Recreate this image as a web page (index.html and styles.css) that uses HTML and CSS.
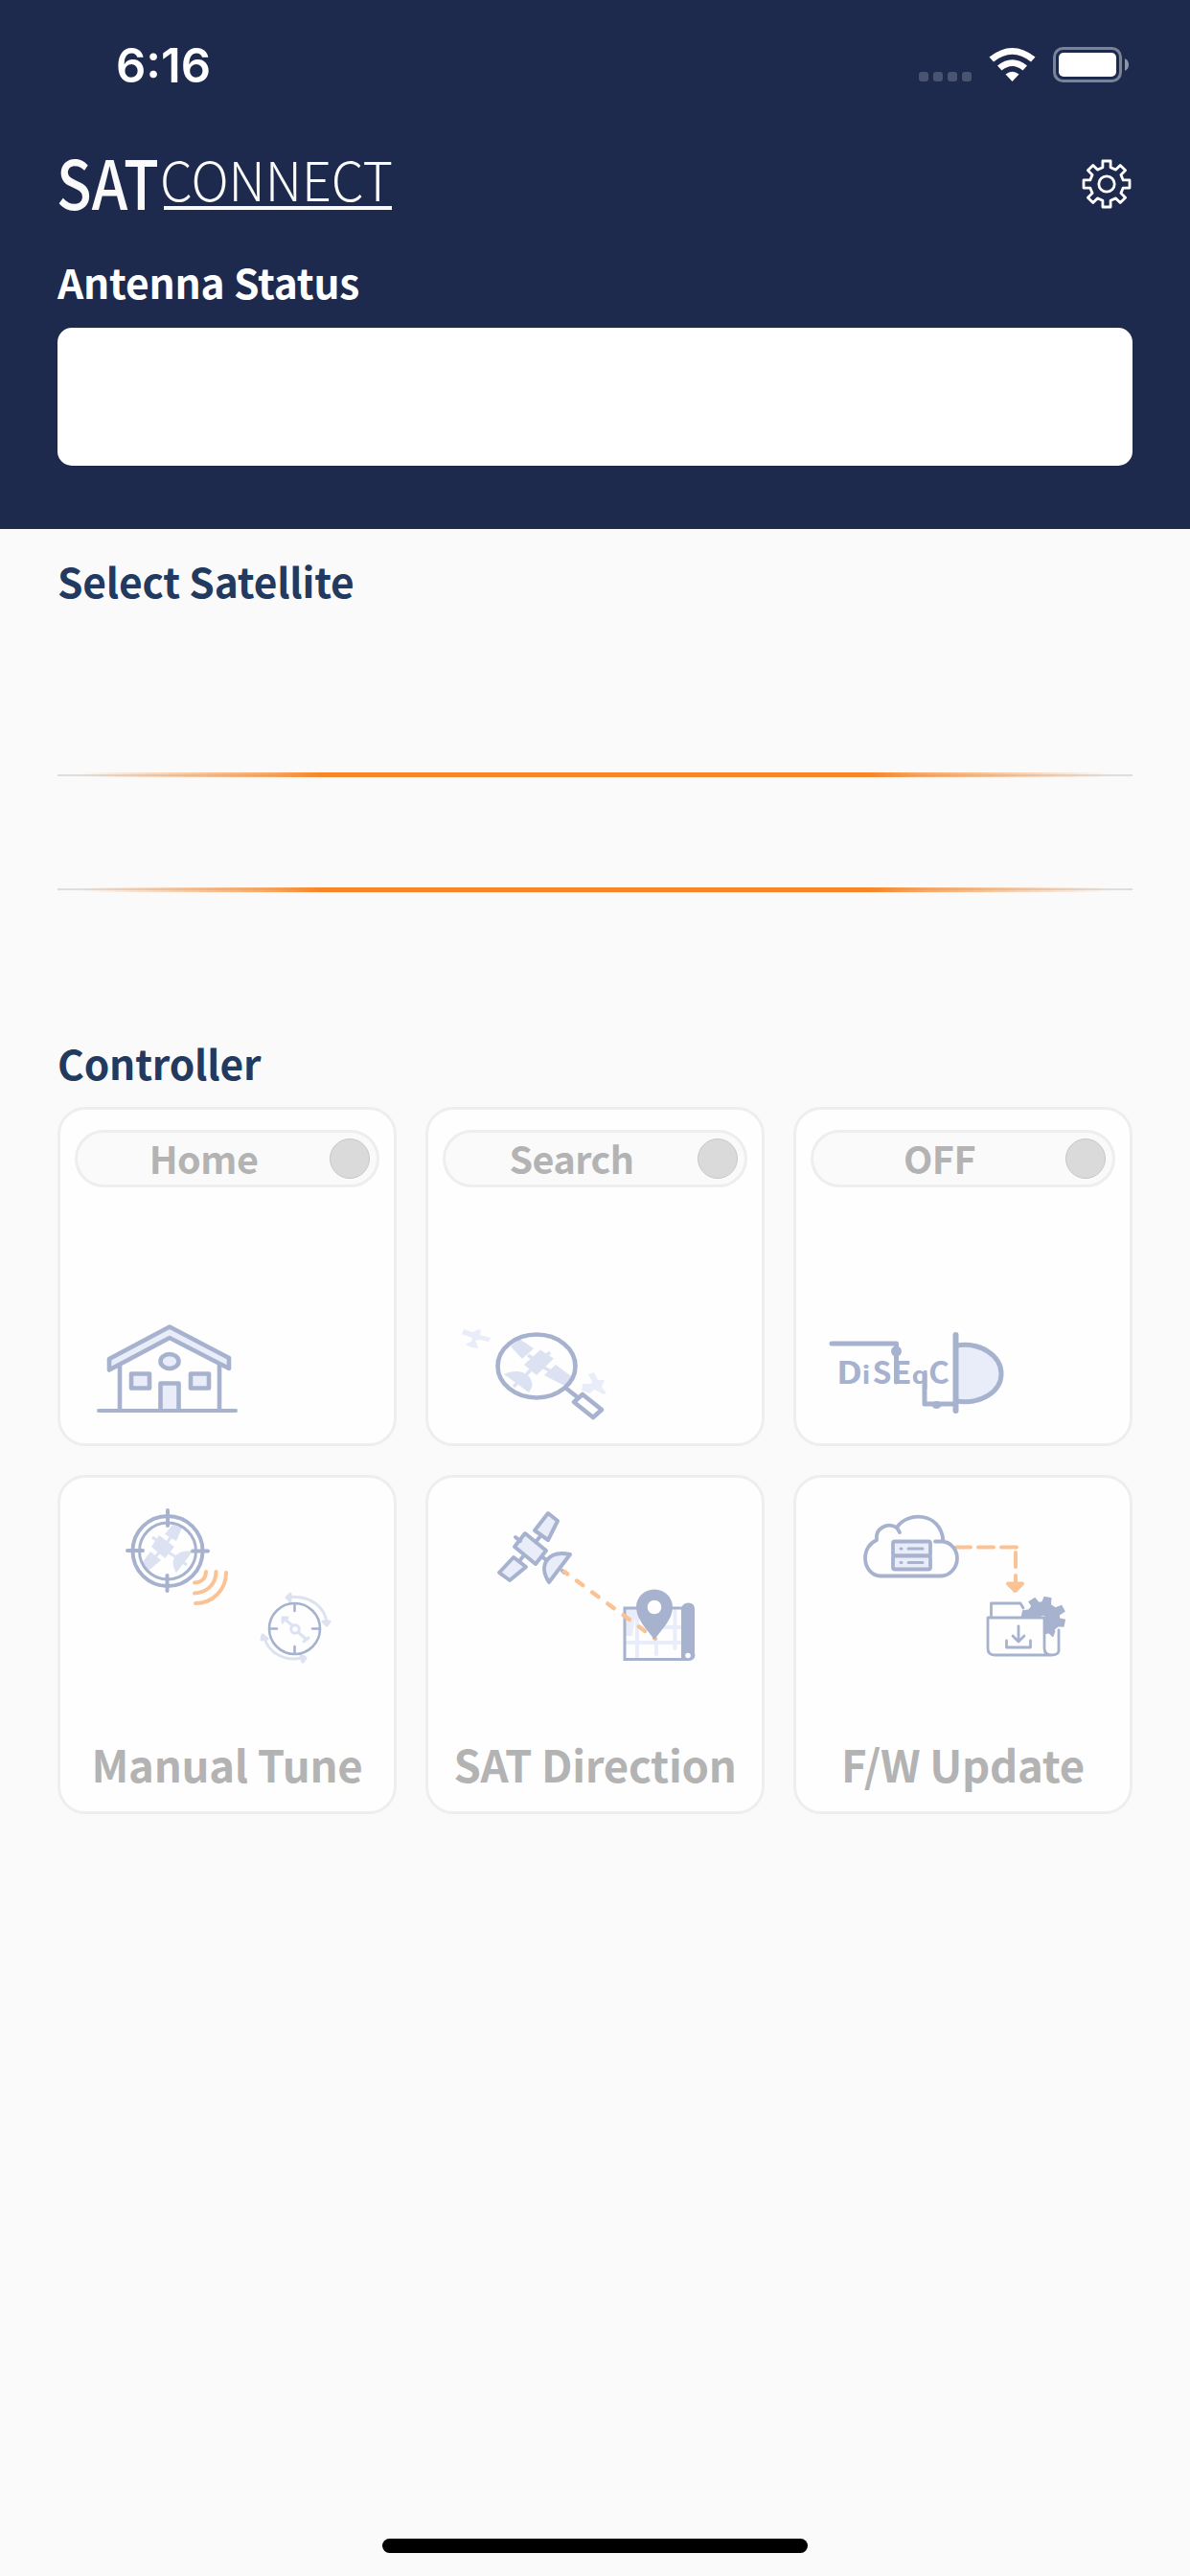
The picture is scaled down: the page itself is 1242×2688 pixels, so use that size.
FILE: index.html
```html
<!DOCTYPE html>
<html lang="en">
<head>
    <meta charset="UTF-8">
    <meta name="viewport" content="width=device-width, initial-scale=1.0">
    <title>SATCONNECT</title>
    <link rel="stylesheet" href="styles.css">
</head>
<body>
    <header class="header">
        <div class="status-bar">
            <span class="time">6:16</span>
            <svg class="status-icons" width="220" height="38" viewBox="0 0 220 38">
                <g fill="#fff" fill-opacity="0.2">
                    <rect x="0" y="26" width="10" height="10" rx="3"/>
                    <rect x="15" y="26" width="10" height="10" rx="3"/>
                    <rect x="30" y="26" width="10" height="10" rx="3"/>
                    <rect x="45" y="26" width="10" height="10" rx="3"/>
                </g>
                <g fill="#fff">
                    <path d="M73.5 10.5 Q97.5 -8.5 121.5 10.5 L117 15.5 Q97.5 0 78 15.5Z"/>
                    <path d="M82 19.5 Q97.5 7 113 19.5 L108.5 24.5 Q97.5 15.5 86.5 24.5Z"/>
                    <path d="M90.5 28.5 Q97.5 23 104.5 28.5 L97.5 36Z"/>
                </g>
                <rect x="141.5" y="1.5" width="69" height="34" rx="9" fill="none" stroke="#fff" stroke-opacity="0.42" stroke-width="3"/>
                <rect x="146" y="6" width="60" height="25" rx="5" fill="#fff"/>
                <path d="M215 12 Q219 14 219 18.5 T215 25Z" fill="#fff" fill-opacity="0.5"/>
            </svg>
        </div>
        <div class="brand-row">
            <svg class="brand" width="352" height="60" viewBox="0 0 352 60">
                <text class="brand-sat" x="-1" y="53" textLength="107" lengthAdjust="spacingAndGlyphs">SAT</text>
                <text class="brand-connect" x="107" y="44" textLength="243" lengthAdjust="spacingAndGlyphs">CONNECT</text>
                <rect x="111" y="49" width="238" height="4"/>
            </svg>
            <svg class="settings" width="52" height="52" viewBox="-26 -26 52 52" fill="none" stroke="#fff" stroke-width="2.8" stroke-linejoin="round">
                <path d="M-4.1 -24H4.1V-17.2L9.6 -14.9L14.2 -19.6L19.6 -14.2L14.9 -9.6L17.2 -4.1H24V4.1H17.2L14.9 9.6L19.6 14.2L14.2 19.6L9.6 14.9L4.1 17.2V24H-4.1V17.2L-9.6 14.9L-14.2 19.6L-19.6 14.2L-14.9 9.6L-17.2 4.1H-24V-4.1H-17.2L-14.9 -9.6L-19.6 -14.2L-14.2 -19.6L-9.6 -14.9L-4.1 -17.2Z"/>
                <circle r="8.2"/>
            </svg>
        </div>
        <h2 class="title title-light">Antenna Status</h2>
        <div class="status-box"></div>
    </header>

    <main class="content">
        <h2 class="title">Select Satellite</h2>
        <div class="picker">
            <div class="picker-line"></div>
            <div class="picker-line picker-line-bottom"></div>
        </div>

        <h2 class="title">Controller</h2>
        <div class="grid">
            <div class="card">
                <div class="switch"><span class="switch-text">Home</span><span class="knob"></span></div>
                <svg class="art" width="346" height="264" viewBox="3 84 346 264" fill="none" stroke="#a7b2cf" stroke-width="4.6" stroke-linejoin="round" stroke-linecap="round">
                    <path d="M65 269V316M169 269V316"/>
                    <path d="M54 263L117 229.5L179 262V273L117 241L54 274.5Z" fill="#e9edfa"/>
                    <ellipse cx="117" cy="265.5" rx="9.5" ry="7.5" fill="#e9edfa"/>
                    <rect x="77" y="278.5" width="19" height="15" fill="#e9edfa"/>
                    <rect x="139" y="278.5" width="19" height="15" fill="#e9edfa"/>
                    <path d="M107.5 316V288.5H126.5V316" fill="#e9edfa"/>
                    <path d="M43 317H186" stroke-width="4"/>
                </svg>
            </div>
            <div class="card">
                <div class="switch"><span class="switch-text">Search</span><span class="knob"></span></div>
                <svg class="art" width="346" height="264" viewBox="3 84 346 264">
                    <g fill="#e9edfa">
                        <path d="M40 232L49 235L52 234L55 232L58 233L57 238L68 241L66 245L57 243L52 244L55 250L54 252L48 251L42 248L45 246L48 245L49 241L38 237Z"/>
                        <path d="M170 279L176 277L180 285L187 285L185 289L184 293L189 298L186 300L176 295L172 299L163 296L164 289L172 289L174 287Z"/>
                    </g>
                    <g fill="#dce2f1" stroke="#dce2f1">
                        <path d="M89 250L98 242L113 252L101 263Z" stroke="none"/>
                        <path d="M120 253.5L134 262.5L116 280L103 269Z" stroke="none"/>
                        <path d="M136 269L152 281L149 290H143L124 280Z" stroke="none"/>
                        <path d="M82 279C98 271 114 280 111 293L108 298Z" stroke="none"/>
                        <path d="M107 259L114 264M121 265L130 256M122 271L131 276M112 272L104 281M97 287L92 292" fill="none" stroke-width="3.5"/>
                    </g>
                    <g fill="none" stroke="#a7b2cf" stroke-width="4.6" stroke-linejoin="round">
                        <ellipse cx="116" cy="270.5" rx="40.5" ry="33"/>
                        <path d="M146 293L160 304"/>
                        <path d="M164 300L184 316L175 324L155 308Z"/>
                    </g>
                </svg>
            </div>
            <div class="card">
                <div class="switch"><span class="switch-text">OFF</span><span class="knob"></span></div>
                <svg class="art" width="346" height="264" viewBox="3 84 346 264">
                    <path d="M170 249C196 245 217 260 217 278.5S196 311 170 307Z" fill="#e9edfa"/>
                    <g fill="none" stroke="#a7b2cf" stroke-width="5" stroke-linejoin="round" stroke-linecap="round">
                        <path d="M170 249C196 245 217 260 217 278.5S196 311 170 307"/>
                        <path d="M169.5 238V317" stroke-width="6"/>
                        <path d="M40 247H107.5V287M137 279V310H168"/>
                    </g>
                    <g fill="#a7b2cf">
                        <circle cx="107.5" cy="255" r="5.5"/>
                        <ellipse cx="149.5" cy="311" rx="5" ry="4"/>
                    </g>
                    <g class="diseqc">
                        <text x="45" y="289" font-size="32" textLength="27" lengthAdjust="spacingAndGlyphs">D</text>
                        <text x="71.5" y="289" font-size="25" textLength="9" lengthAdjust="spacingAndGlyphs">i</text>
                        <text x="82.5" y="289" font-size="32">S</text>
                        <text x="102.5" y="289" font-size="32" textLength="21" lengthAdjust="spacingAndGlyphs">E</text>
                        <text x="123.5" y="289" font-size="24" textLength="18" lengthAdjust="spacingAndGlyphs">q</text>
                        <text x="141" y="289" font-size="32" textLength="22" lengthAdjust="spacingAndGlyphs">C</text>
                    </g>
                </svg>
            </div>
            <div class="card">
                <svg class="art" width="346" height="270" viewBox="3 3 346 270">
                    <g fill="#dce2f1">
                        <path d="M120 52L130 55L124 69L112 62Z"/>
                        <path d="M106 63L122 75L112 87L98 75Z"/>
                        <path d="M97 80L108 89L95 100L88 92Z"/>
                        <path d="M124 102C115 88 125 77 141 80Z"/>
                        <path d="M99 65L106 70M114 71L119 64M106 81L101 87M116 81L124 86M129 90L135 94" fill="none" stroke="#dce2f1" stroke-width="3"/>
                    </g>
                    <g fill="none" stroke="#a7b2cf" stroke-linecap="round">
                        <circle cx="115" cy="79.5" r="36.5" stroke-width="4"/>
                        <circle cx="115" cy="79.5" r="29.5" stroke-width="3"/>
                        <path d="M115 37V53M114.5 105V121M73 79H89M141 79.5H157" stroke-width="4"/>
                    </g>
                    <g fill="none" stroke="#fbc294" stroke-width="4" stroke-linecap="round">
                        <path d="M155 101C155 108 150 112.5 143 112.5"/>
                        <path d="M165.5 101C165.5 114 156 123 143 123.5"/>
                        <path d="M176 102C176 120 162 134 144 134"/>
                    </g>
                    <g fill="none" stroke="#dce2f1" stroke-width="3" stroke-linecap="round" stroke-linejoin="round">
                        <path d="M242 127.5C265 126 279 138 281 154"/>
                        <path d="M216 170C220 186 238 195 255 191"/>
                        <path d="M243 124L239 128L243 132ZM277 153H284L281 157ZM214 167L213 172L219 171ZM254 188L259 191L256 195Z" fill="#dce2f1"/>
                        <circle cx="248" cy="161" r="4.3"/>
                        <path d="M245 157L235 149M251 164L259 171M235 154V149H240M257 174L262 170"/>
                    </g>
                    <g fill="none" stroke="#a7b2cf" stroke-width="2.6" stroke-linecap="round">
                        <circle cx="247.5" cy="160.5" r="26.5"/>
                        <path d="M247.5 136V142M247.5 179V185M223 160.5H229M266 160.5H272"/>
                    </g>
                </svg>
                <div class="card-label">Manual Tune</div>
            </div>
            <div class="card">
                <svg class="art" width="346" height="270" viewBox="3 3 346 270">
                    <g fill="#e9edfa" stroke="#a7b2cf" stroke-width="4" stroke-linejoin="round" stroke-linecap="round">
                        <path d="M128 40L138 48L128 68L114 58Z"/>
                        <path d="M104 61L126 79L115 93L93 75Z"/>
                        <path d="M92 86L105 96L88 110L77 102Z"/>
                        <path d="M129 112C117 94 128 78 151 83Z"/>
                        <path d="M94 65L99 69M120 64L115 70M102 85L98 90M122 86L127 89M143 100L145 102" fill="none"/>
                    </g>
                    <g fill="none" stroke="#e9edfa" stroke-width="4">
                        <path d="M210 175H267M237 159H267M221 145V191M241 175V187M260.5 142V181" stroke-linecap="round"/>
                        <path d="M210 142H218L214 166H210Z" fill="#e9edfa"/>
                    </g>
                    <path d="M272 139H208V192.5H275Q280 192.5 280 187" fill="none" stroke="#a7b2cf" stroke-width="3"/>
                    <path d="M267 191V140Q268 133.5 274.5 133.5T281 140V187Q280 194 273 194H269Z" fill="#a7b2cf"/>
                    <circle cx="274" cy="188.5" r="2.8" fill="#fefefe"/>
                    <!-- пунктир от антенны к метке -->
                    <path d="M145 101L240 171" fill="none" stroke="#fbc294" stroke-width="4.4" stroke-linecap="round" stroke-dasharray="8 12.1" stroke-dashoffset="4"/>
                    <path d="M239 119.5C228 119.5 220 128 220 138C220 151 232 162 239 172C246 162 258 151 258 138C258 128 250 119.5 239 119.5Z" fill="#a7b2cf"/>
                    <circle cx="239" cy="138" r="7.3" fill="#fefefe"/>
                </svg>
                <div class="card-label">SAT Direction</div>
            </div>
            <div class="card">
                <svg class="art" width="346" height="270" viewBox="3 3 346 270">
                    <g fill="none" stroke="#fbc294" stroke-width="4" stroke-linecap="round">
                        <path d="M170 75.5H185M193 75.5H209M217 75.5H233M232 81V96M232 105V114"/>
                        <path d="M224 113.5H239L231.5 121Z" fill="#fbc294" stroke-linejoin="round"/>
                    </g>
                    <g fill="none" stroke="#a7b2cf" stroke-width="3.8" stroke-linecap="round" stroke-linejoin="round">
                        <path d="M148 69.5H154C165 69.5 171 79 171 87C171 97 163 105.5 154 105.5H91C82 105.5 75 97 75 87C75 78 80 71 87 68C85 56 98 49 108 55C118 38 154 38 156.5 69"/>
                        <path d="M108 55L111 60"/>
                        <rect x="104" y="69.5" width="39" height="15" rx="2" fill="#e9edfa"/>
                        <rect x="104" y="84.5" width="39" height="14" rx="2" fill="#e9edfa"/>
                        <path d="M112 77H113M120 77H135M112 91.5H113M120 91.5H135" stroke-width="3"/>
                    </g>
                    <g fill="#a7b2cf" transform="translate(261 149) rotate(12)">
                        <path d="M-4 -22H4L5 -15L10 -13L16 -17L21 -11L16 -6L17 -3L23 -3V5L17 6L14 10L18 14L14 18L9 15L4 17V21H-4V16L-15 7L-23 5V-3L-17 -5L-15 -9L-19 -13L-13 -19L-8 -15L-5 -16Z"/>
                    </g>
                    <path d="M206 149H257Q260 145 263 148L262 187H213Q206 187 206 180Z" fill="#fefefe"/>
                    <path d="M263 173L271 170L274 162L277 165V180Q277 187 270 187T262 180Z" fill="#fefefe"/>
                    <g fill="none" stroke="#a7b2cf" stroke-width="2.8" stroke-linecap="round" stroke-linejoin="round">
                        <path d="M206.5 148V134H237L240 139M203 149H262V181Q262 188 270 188T277 181V162M203 149V181Q203 188 210 188H270"/>
                        <path d="M235 158V174M229 168L235 174L241 168M222.5 173V180H247.5V173"/>
                    </g>
                </svg>
                <div class="card-label">F/W Update</div>
            </div>
        </div>
    </main>
    <div class="home-indicator"></div>
</body>
</html>
```
FILE: styles.css
```css
* {
    box-sizing: border-box;
}
body, html {
    margin: 0;
    font-family: "Noto Sans CJK KR", "Noto Sans", sans-serif;
    background-color: #fafafa;
}
body {
    display: flex;
    flex-direction: column;
    min-height: 2688px;
}
.header {
    height: 552px;
    padding: 0 60px;
    background-color: #1d2a4d;
    color: #ffffff;
}
.status-bar {
    display: flex;
    justify-content: space-between;
    height: 132px;
    padding: 49px 0 0 61px;
}
.time {
    font-family: Inter, sans-serif;
    font-size: 49px;
    font-weight: 600;
    line-height: 40px;
}
.status-icons {
    margin-right: 3px;
}
.brand-row {
    display: flex;
    justify-content: space-between;
    height: 120px;
    padding-top: 34px;
}
.brand {
    fill: #fafafa;
    overflow: visible;
}
.brand-sat {
    font-size: 71px;
    font-weight: 500;
}
.brand-connect {
    font-size: 56px;
    font-weight: 300;
}
.settings {
    margin: 0 1px;
}
.title {
    margin: 0;
    font-size: 42.5px;
    font-weight: 700;
    line-height: 58px;
    letter-spacing: -0.2px;
    color: #233a60;
}
.title-light {
    padding-top: 13px;
    color: #ffffff;
}
.status-box {
    height: 144px;
    margin-top: 19px;
    border-radius: 15px;
    background-color: #ffffff;
}
.content {
    flex: 1;
    padding: 25px 60px 0;
}
.picker {
    display: flex;
    flex-direction: column;
    gap: 115px;
    height: 445px;
    padding-top: 171px;
}
/* тонкая серая линия под оранжевым градиентом */
.picker-line {
    height: 5px;
    background:
        linear-gradient(90deg, rgba(247, 134, 40, 0) 2%, rgba(247, 134, 40, 0.72) 20%, #f78628 24.5%, #f78628 75.5%, rgba(247, 134, 40, 0.72) 80%, rgba(247, 134, 40, 0) 98%),
        linear-gradient(#dedede, #dedede) 0 2px / 100% 2px no-repeat;
}
.picker-line-bottom {
    background-position: 0 0, 0 1px;
}
.grid {
    display: grid;
    grid-template-columns: repeat(3, 354px);
    gap: 30px;
    margin-top: 17px;
}
.card {
    height: 354px;
    border: 3px solid #eeeeee;
    border-radius: 29px;
    background-color: #fefefe;
    overflow: hidden;
}
.switch {
    display: flex;
    align-items: center;
    height: 60px;
    margin: 21px 15px 0;
    padding-right: 9px;
    border: 3px solid #eeeeee;
    border-radius: 30px;
    background-color: #fafafa;
}
.switch-text {
    flex: 1;
    height: 54px;
    text-align: center;
    font-size: 39.5px;
    font-weight: 700;
    line-height: 52px;
    letter-spacing: -0.5px;
    color: #b3b3b3;
}
.knob {
    width: 42px;
    height: 42px;
    margin-right: -2px;
    border: 1px solid #c8c8c8;
    border-radius: 50%;
    background-color: #dadada;
}
.art {
    display: block;
}
.diseqc {
    font-weight: 700;
    fill: #a7b2cf;
}
.card-label {
    margin-top: -2px;
    text-align: center;
    font-size: 45.5px;
    font-weight: 700;
    line-height: 60px;
    letter-spacing: -0.3px;
    color: #b3b3b3;
}
.home-indicator {
    width: 444px;
    height: 15px;
    margin: 0 auto 24px;
    border-radius: 8px;
    background-color: #000000;
}
```
